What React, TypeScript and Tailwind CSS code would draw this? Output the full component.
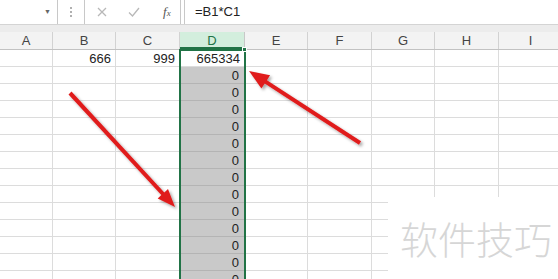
import React from 'react';

const COLS = [
  { label: 'A', w: 53 },
  { label: 'B', w: 63 },
  { label: 'C', w: 64 },
  { label: 'D', w: 65 },
  { label: 'E', w: 63 },
  { label: 'F', w: 64 },
  { label: 'G', w: 63 },
  { label: 'H', w: 64 },
  { label: 'I', w: 64 },
];

const ROW_COUNT = 14;

function cellValue(row: number, col: string) {
  if (row === 0) {
    if (col === 'B') return '666';
    if (col === 'C') return '999';
    if (col === 'D') return '665334';
    return '';
  }
  return col === 'D' ? '0' : '';
}

// arrow polygon: shaft + head, from tail to tip
function arrowPoints(x1: number, y1: number, x2: number, y2: number, head: number, halfW: number, shaft: number) {
  const dx = x2 - x1;
  const dy = y2 - y1;
  const len = Math.hypot(dx, dy);
  const ux = dx / len;
  const uy = dy / len;
  const px = -uy;
  const py = ux;
  const bx = x2 - ux * head;
  const by = y2 - uy * head;
  const pts = [
    [x1 + px * shaft, y1 + py * shaft],
    [bx + px * shaft, by + py * shaft],
    [bx + px * halfW, by + py * halfW],
    [x2, y2],
    [bx - px * halfW, by - py * halfW],
    [bx - px * shaft, by - py * shaft],
    [x1 - px * shaft, y1 - py * shaft],
  ];
  return pts.map((p) => p.map((v) => v.toFixed(1)).join(',')).join(' ');
}

export default function App() {
  return (
    <div className="relative w-[558px] h-[279px] overflow-hidden bg-white font-['Liberation_Sans',Arial,sans-serif] text-[#222]">
      {/* Formula bar */}
      <div className="flex h-[25px] items-center bg-white border-b border-[#d4d4d4]">
        <div className="flex h-[24px] w-[58px] items-center justify-end border-r border-[#c8c8c8] pr-[6px]">
          <span className="text-[7px] text-[#666]">▼</span>
        </div>
        <div className="flex w-[26px] flex-col items-center justify-center gap-[2px]">
          <span className="h-[2px] w-[2px] bg-[#b0b0b0]" />
          <span className="h-[2px] w-[2px] bg-[#b0b0b0]" />
          <span className="h-[2px] w-[2px] bg-[#b0b0b0]" />
        </div>
        <div className="flex h-[24px] w-[97px] items-center border-x border-[#c8c8c8]">
          <svg width="14" height="14" viewBox="0 0 14 14" className="ml-[10px]">
            <path d="M3 3 L11 11 M11 3 L3 11" stroke="#b8b8b8" strokeWidth="1.3" />
          </svg>
          <svg width="14" height="14" viewBox="0 0 14 14" className="ml-[18px]">
            <path d="M2 7.5 L5.5 11 L12 3" stroke="#b8b8b8" strokeWidth="1.3" fill="none" />
          </svg>
          <span className="ml-[22px] font-['Liberation_Serif',serif] italic text-[13px] text-[#555]">
            f<span className="text-[9px]">x</span>
          </span>
        </div>
        <div className="ml-[3px] flex h-[24px] flex-1 items-center border-l border-[#c8c8c8] pl-[10px] text-[13px] text-[#222]">
          =B1*C1
        </div>
      </div>

      {/* gap band */}
      <div className="h-[7px] bg-[#ececec]" />

      {/* column headers */}
      <div className="flex h-[18px] bg-[#f3f3f3] border-b border-[#c2c2c2]">
        {COLS.map((c) => (
          <div
            key={c.label}
            style={{ width: c.w }}
            className={
              c.label === 'D'
                ? 'shrink-0 flex items-center justify-center border-r border-[#c8c8c8] bg-[#d3eedd] text-[13px] text-[#217346] shadow-[inset_0_-2px_0_#217346]'
                : 'shrink-0 flex items-center justify-center border-r border-[#d2d2d2] text-[13px] text-[#444]'
            }
          >
            {c.label}
          </div>
        ))}
      </div>

      {/* rows */}
      {Array.from({ length: ROW_COUNT }).map((_, r) => (
        <div key={r} className="flex h-[17px]">
          {COLS.map((c) => {
            const v = cellValue(r, c.label);
            const inSel = c.label === 'D' && r > 0;
            return (
              <div
                key={c.label}
                style={{ width: c.w }}
                className={
                  inSel
                    ? 'shrink-0 flex items-center justify-end border-r border-b border-[#b4b4b4] bg-[#c9c9c9] pr-[5px] text-[13px] leading-none'
                    : 'shrink-0 flex items-center justify-end border-r border-b border-[#dcdcdc] pr-[4px] text-[13px] leading-none'
                }
              >
                {v}
              </div>
            );
          })}
        </div>
      ))}

      {/* selection outline on column D */}
      <div className="absolute left-[179px] top-[49px] h-[240px] w-[67px] border-2 border-[#217346]" />
      <div className="absolute left-[242px] top-[47px] h-[5px] w-[5px] bg-[#217346] border border-white" />

      {/* red arrows */}
      <svg className="absolute left-0 top-0" width="558" height="279" viewBox="0 0 558 279">
        <defs>
          <filter id="sh" x="-20%" y="-20%" width="140%" height="140%">
            <feDropShadow dx="2" dy="2" stdDeviation="1.5" floodColor="#000" floodOpacity="0.35" />
          </filter>
        </defs>
        <polygon points={arrowPoints(70, 93, 175, 207, 18, 7, 2)} fill="#e01e1e" filter="url(#sh)" />
        <polygon points={arrowPoints(360, 143, 249, 71, 20, 8, 2)} fill="#e01e1e" filter="url(#sh)" />
      </svg>

      {/* watermark */}
      <div className="absolute left-[388px] top-[197px] right-0 bottom-0 bg-white pl-[12px] pt-[22px]">
        <span className="font-['Noto_Sans_CJK_SC',sans-serif] font-light text-[38px] leading-none text-[#d6d6d6]">软件技巧</span>
      </div>
    </div>
  );
}
